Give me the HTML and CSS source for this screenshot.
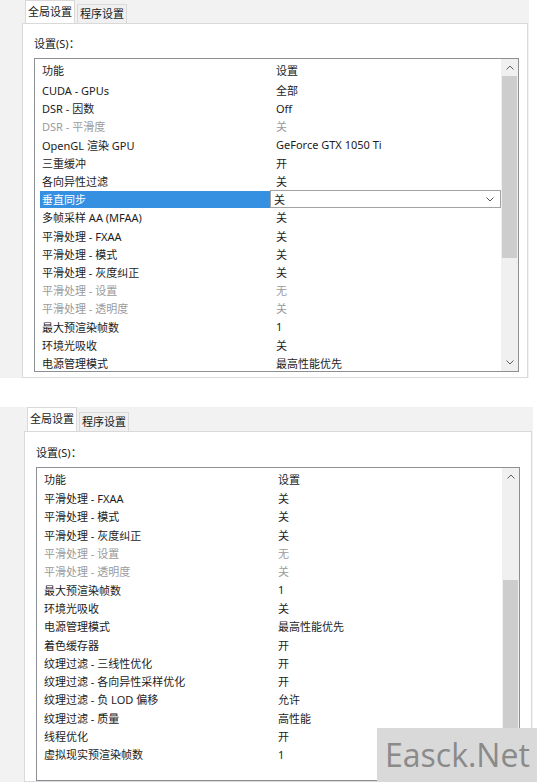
FILE: index.html
```html
<!DOCTYPE html>
<html lang="zh">
<head>
<meta charset="utf-8">
<link rel="stylesheet" href="styles.css">
</head>
<body>
<div class="win win1">
  <div class="tabs">
    <div class="tab active">全局设置</div>
    <div class="tab">程序设置</div>
  </div>
  <div class="panel">
    <div class="label">设置(S)：</div>
    <div class="list">
      <div class="rows">
        <div class="row head"><span class="c1">功能</span><span class="c2">设置</span></div>
        <div class="row"><span class="c1">CUDA - GPUs</span><span class="c2">全部</span></div>
        <div class="row"><span class="c1">DSR - 因数</span><span class="c2">Off</span></div>
        <div class="row dis"><span class="c1">DSR - 平滑度</span><span class="c2">关</span></div>
        <div class="row"><span class="c1">OpenGL 渲染 GPU</span><span class="c2">GeForce GTX 1050 Ti</span></div>
        <div class="row"><span class="c1">三重缓冲</span><span class="c2">开</span></div>
        <div class="row"><span class="c1">各向异性过滤</span><span class="c2">关</span></div>
        <div class="row sel"><span class="c1">垂直同步</span><span class="c2"><span>关</span><svg width="8" height="5" viewBox="0 0 8 5"><polyline points="0.5,0.5 4,4 7.5,0.5" fill="none" stroke="#555" stroke-width="1"/></svg></span></div>
        <div class="row"><span class="c1">多帧采样 AA (MFAA)</span><span class="c2">关</span></div>
        <div class="row"><span class="c1">平滑处理 - FXAA</span><span class="c2">关</span></div>
        <div class="row"><span class="c1">平滑处理 - 模式</span><span class="c2">关</span></div>
        <div class="row"><span class="c1">平滑处理 - 灰度纠正</span><span class="c2">关</span></div>
        <div class="row dis"><span class="c1">平滑处理 - 设置</span><span class="c2">无</span></div>
        <div class="row dis"><span class="c1">平滑处理 - 透明度</span><span class="c2">关</span></div>
        <div class="row"><span class="c1">最大预渲染帧数</span><span class="c2">1</span></div>
        <div class="row"><span class="c1">环境光吸收</span><span class="c2">关</span></div>
        <div class="row"><span class="c1">电源管理模式</span><span class="c2">最高性能优先</span></div>
      </div>
      <div class="sb">
        <div class="arrow"><svg width="8" height="5" viewBox="0 0 8 5"><polyline points="0.5,4.5 4,1 7.5,4.5" fill="none" stroke="#606060" stroke-width="1"/></svg></div>
        <div class="track"><div class="thumb thumb1"></div></div>
        <div class="arrow"><svg width="8" height="5" viewBox="0 0 8 5"><polyline points="0.5,0.5 4,4 7.5,0.5" fill="none" stroke="#606060" stroke-width="1"/></svg></div>
      </div>
    </div>
  </div>
</div>

<div class="gap"></div>

<div class="win win2">
  <div class="tabs">
    <div class="tab active">全局设置</div>
    <div class="tab">程序设置</div>
  </div>
  <div class="panel">
    <div class="label">设置(S)：</div>
    <div class="list">
      <div class="rows">
        <div class="row head"><span class="c1">功能</span><span class="c2">设置</span></div>
        <div class="row"><span class="c1">平滑处理 - FXAA</span><span class="c2">关</span></div>
        <div class="row"><span class="c1">平滑处理 - 模式</span><span class="c2">关</span></div>
        <div class="row"><span class="c1">平滑处理 - 灰度纠正</span><span class="c2">关</span></div>
        <div class="row dis"><span class="c1">平滑处理 - 设置</span><span class="c2">无</span></div>
        <div class="row dis"><span class="c1">平滑处理 - 透明度</span><span class="c2">关</span></div>
        <div class="row"><span class="c1">最大预渲染帧数</span><span class="c2">1</span></div>
        <div class="row"><span class="c1">环境光吸收</span><span class="c2">关</span></div>
        <div class="row"><span class="c1">电源管理模式</span><span class="c2">最高性能优先</span></div>
        <div class="row"><span class="c1">着色缓存器</span><span class="c2">开</span></div>
        <div class="row"><span class="c1">纹理过滤 - 三线性优化</span><span class="c2">开</span></div>
        <div class="row"><span class="c1">纹理过滤 - 各向异性采样优化</span><span class="c2">开</span></div>
        <div class="row"><span class="c1">纹理过滤 - 负 LOD 偏移</span><span class="c2">允许</span></div>
        <div class="row"><span class="c1">纹理过滤 - 质量</span><span class="c2">高性能</span></div>
        <div class="row"><span class="c1">线程优化</span><span class="c2">开</span></div>
        <div class="row"><span class="c1">虚拟现实预渲染帧数</span><span class="c2">1</span></div>
      </div>
      <div class="sb">
        <div class="arrow"><svg width="8" height="5" viewBox="0 0 8 5"><polyline points="0.5,4.5 4,1 7.5,4.5" fill="none" stroke="#606060" stroke-width="1"/></svg></div>
        <div class="track"><div class="thumb thumb2"></div></div>
        <div class="arrow"><svg width="8" height="5" viewBox="0 0 8 5"><polyline points="0.5,0.5 4,4 7.5,0.5" fill="none" stroke="#606060" stroke-width="1"/></svg></div>
      </div>
    </div>
  </div>
</div>

<div class="wm">Easck.Net</div>
</body>
</html>
```

FILE: styles.css
```css
html, body {
  margin: 0;
  padding: 0;
}
body {
  position: relative;
  height: 782px;
  overflow: hidden;
  background: #fff;
  font-family: "Noto Sans", "Noto Sans CJK SC", sans-serif;
  font-size: 11px;
  color: #1c1c1c;
}
.win {
  box-sizing: border-box;
  background: #f2f2f2;
  display: flex;
  flex-direction: column;
}
.win1 {
  width: 529px;
  height: 378px;
  padding-left: 22px;
}
.win2 {
  width: 533px;
  height: 375px;
  padding-left: 24px;
}
.gap {
  height: 29px;
}
.tabs {
  display: flex;
  align-items: flex-end;
  gap: 2px;
  padding-left: 3px;
  height: 23px;
  flex: none;
}
.win2 .tabs {
  height: 24px;
}
.tab {
  box-sizing: border-box;
  width: 50px;
  height: 19px;
  line-height: 18px;
  text-align: center;
  border: 1px solid #d9d9d9;
  border-bottom: none;
  background: #f0f0f0;
  color: #1a1a1a;
}
.tab.active {
  height: 100%;
  line-height: 22px;
  background: #fff;
}
.panel {
  box-sizing: border-box;
  flex: 1;
  background: #fff;
  border: 1px solid #d9d9d9;
  padding: 12px 0 0 11px;
}
.win1 .panel {
  width: 506px;
}
.win2 .panel {
  width: 508px;
  padding-top: 13px;
}
.label {
  line-height: 16px;
  margin-bottom: 6px;
  color: #1a1a1a;
}
.list {
  box-sizing: border-box;
  width: 485px;
  height: 314px;
  border: 1px solid #8c8f94;
  display: flex;
  background: #fff;
}
.win2 .list {
  width: 484px;
}
.rows {
  flex: 1;
  overflow: hidden;
}
.row {
  display: flex;
  align-items: center;
  height: 18.2px;
  white-space: nowrap;
}
.win2 .row {
  height: 18.3px;
}
.row.head {
  height: 22px;
}
.win2 .row.head {
  height: 21px;
}
.c1 {
  box-sizing: border-box;
  width: 235px;
  padding-left: 7px;
  flex: none;
}
.c2 {
  padding-left: 6px;
}
.dis {
  color: #9b9b9b;
}
.sel .c1 {
  margin-left: 5px;
  width: 230px;
  padding-left: 2px;
  height: 17px;
  line-height: 17px;
  background: #3590e2;
  color: #fff;
}
.sel .c2 {
  box-sizing: border-box;
  width: 232px;
  height: 18px;
  border: 1px solid #a3a3a3;
  padding: 0 6px 0 3px;
  display: flex;
  align-items: center;
  justify-content: space-between;
}
.sb {
  width: 17px;
  flex: none;
  display: flex;
  flex-direction: column;
  background: #f0f0f0;
}
.arrow {
  height: 17px;
  flex: none;
  display: flex;
  align-items: center;
  justify-content: center;
}
.track {
  flex: 1;
  display: flex;
  flex-direction: column;
}
.thumb {
  margin: 0 1px;
  background: #cdcdcd;
}
.thumb1 {
  height: 182px;
}
.thumb2 {
  margin-top: 95px;
  flex: 1;
}
.wm {
  position: absolute;
  left: 377px;
  top: 728px;
  width: 160px;
  height: 54px;
  box-sizing: border-box;
  padding-left: 8px;
  background: #d9d9d9;
  color: #8a8a8a;
  font-family: "Open Sans", sans-serif;
  font-size: 32px;
  line-height: 54px;
}
```
